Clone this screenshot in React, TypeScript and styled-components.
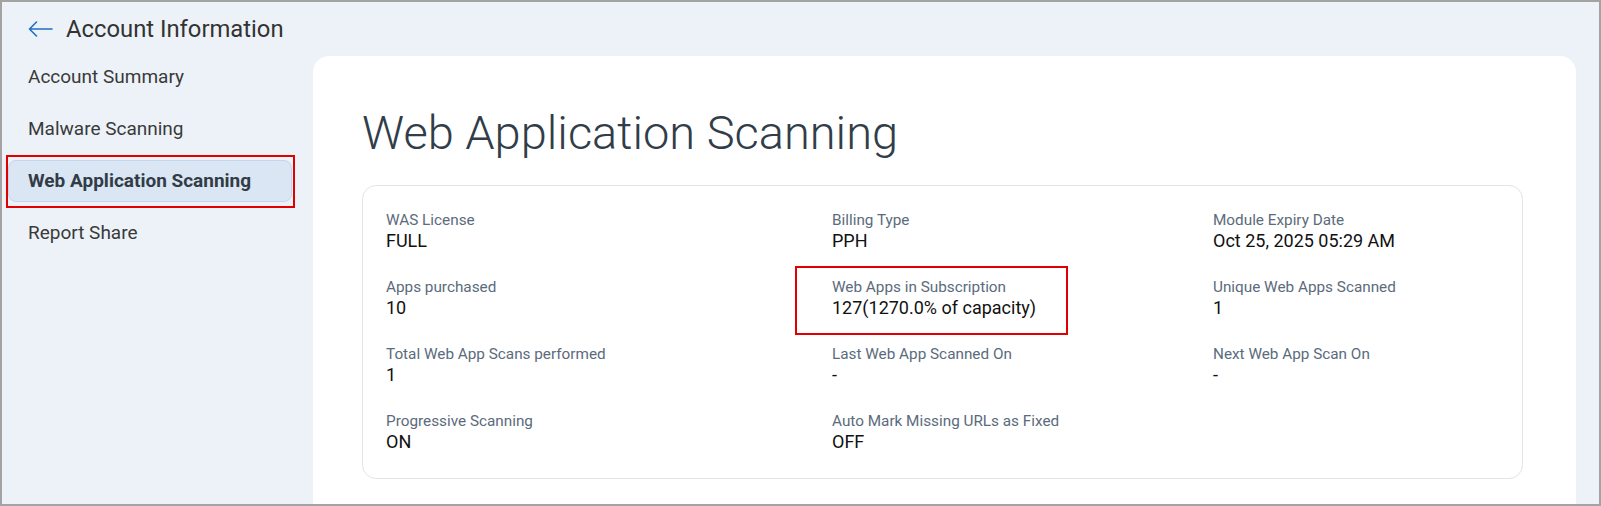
import React from "react";
import styled, { createGlobalStyle } from "styled-components";

const GlobalStyle = createGlobalStyle`
  html, body {
    margin: 0;
    padding: 0;
  }
  body {
    font-family: Roboto, "Liberation Sans", Arial, sans-serif;
  }
`;

const Page = styled.div`
  width: 1601px;
  height: 506px;
  box-sizing: border-box;
  border: 2px solid #a3a3a3;
  background: #edf2f9;
  display: flex;
  overflow: hidden;
`;

const Sidebar = styled.aside`
  width: 311px;
  flex-shrink: 0;
  padding-top: 13px;
  box-sizing: border-box;
`;

const Header = styled.div`
  display: flex;
  align-items: center;
  gap: 13px;
  height: 28px;
  padding-left: 26px;
`;

const BackButton = styled.button`
  border: none;
  background: none;
  padding: 0;
  display: flex;
  cursor: pointer;
  color: #1f6fc4;
`;

const HeaderTitle = styled.h1`
  margin: 0;
  font-size: 23.8px;
  line-height: 28px;
  font-weight: 400;
  color: #333333;
`;

const Nav = styled.nav`
  margin-top: 13px;
  display: flex;
  flex-direction: column;
  gap: 10px;
`;

const NavItem = styled.div<{ $active?: boolean; $marked?: boolean }>`
  position: relative;
  margin-left: 6px;
  width: 284px;
  height: 42px;
  box-sizing: border-box;
  padding-left: 19px;
  border: 1px solid ${(p) => (p.$active ? "#c3d6ee" : "transparent")};
  border-radius: 8px;
  background: ${(p) => (p.$active ? "#dae6f4" : "transparent")};
  font-size: 19px;
  line-height: 40px;
  font-weight: ${(p) => (p.$active ? 700 : 400)};
  color: ${(p) => (p.$active ? "#323c46" : "#3a3a3a")};
  cursor: pointer;

  ${(p) =>
    p.$marked &&
    `
    &::after {
      content: "";
      position: absolute;
      top: -6px;
      bottom: -7px;
      left: -3px;
      right: -4px;
      border: 2px solid #e00000;
      pointer-events: none;
    }
  `}
`;

const Main = styled.main`
  flex: 1;
  padding: 54px 23px 0 0;
`;

const Card = styled.section`
  background: #ffffff;
  border-radius: 16px;
  height: 480px;
  box-sizing: border-box;
  padding: 49px 53px 0 49px;
`;

const Title = styled.h2`
  margin: 0;
  font-size: 47px;
  line-height: 56px;
  font-weight: 300;
  color: #313d49;
`;

const InfoBox = styled.div`
  margin-top: 24px;
  border: 1px solid #e1e4e8;
  border-radius: 14px;
  padding: 24px 0 25px 23px;
  display: grid;
  grid-template-columns: 446px 381px 1fr;
  row-gap: 25px;
`;

const Field = styled.div<{ $marked?: boolean }>`
  position: relative;

  ${(p) =>
    p.$marked &&
    `
    &::after {
      content: "";
      position: absolute;
      left: -37px;
      top: -11px;
      width: 273px;
      height: 69px;
      box-sizing: border-box;
      border: 2px solid #e00000;
      pointer-events: none;
    }
  `}
`;

const Label = styled.div`
  font-size: 15.3px;
  line-height: 20px;
  color: #5b6b7c;
`;

const Value = styled.div`
  font-size: 18px;
  line-height: 22px;
  color: #111111;
`;

const fields = [
  { label: "WAS License", value: "FULL" },
  { label: "Billing Type", value: "PPH" },
  { label: "Module Expiry Date", value: "Oct 25, 2025 05:29 AM" },
  { label: "Apps purchased", value: "10" },
  { label: "Web Apps in Subscription", value: "127(1270.0% of capacity)", marked: true },
  { label: "Unique Web Apps Scanned", value: "1" },
  { label: "Total Web App Scans performed", value: "1" },
  { label: "Last Web App Scanned On", value: "-" },
  { label: "Next Web App Scan On", value: "-" },
  { label: "Progressive Scanning", value: "ON" },
  { label: "Auto Mark Missing URLs as Fixed", value: "OFF" },
];

const navItems = [
  "Account Summary",
  "Malware Scanning",
  "Web Application Scanning",
  "Report Share",
];

export default function App() {
  const active = "Web Application Scanning";

  return (
    <>
      <GlobalStyle />
      <Page>
        <Sidebar>
          <Header>
            <BackButton aria-label="Back">
              <svg width="25" height="16" viewBox="0 0 25 16" fill="none">
                <path
                  d="M1.5 8 H24 M8.5 1 L1.5 8 L8.5 15"
                  stroke="currentColor"
                  strokeWidth="1.6"
                  strokeLinecap="round"
                  strokeLinejoin="round"
                />
              </svg>
            </BackButton>
            <HeaderTitle>Account Information</HeaderTitle>
          </Header>
          <Nav>
            {navItems.map((item) => (
              <NavItem key={item} $active={item === active} $marked={item === active}>
                {item}
              </NavItem>
            ))}
          </Nav>
        </Sidebar>
        <Main>
          <Card>
            <Title>Web Application Scanning</Title>
            <InfoBox>
              {fields.map((f) => (
                <Field key={f.label} $marked={f.marked}>
                  <Label>{f.label}</Label>
                  <Value>{f.value}</Value>
                </Field>
              ))}
            </InfoBox>
          </Card>
        </Main>
      </Page>
    </>
  );
}
